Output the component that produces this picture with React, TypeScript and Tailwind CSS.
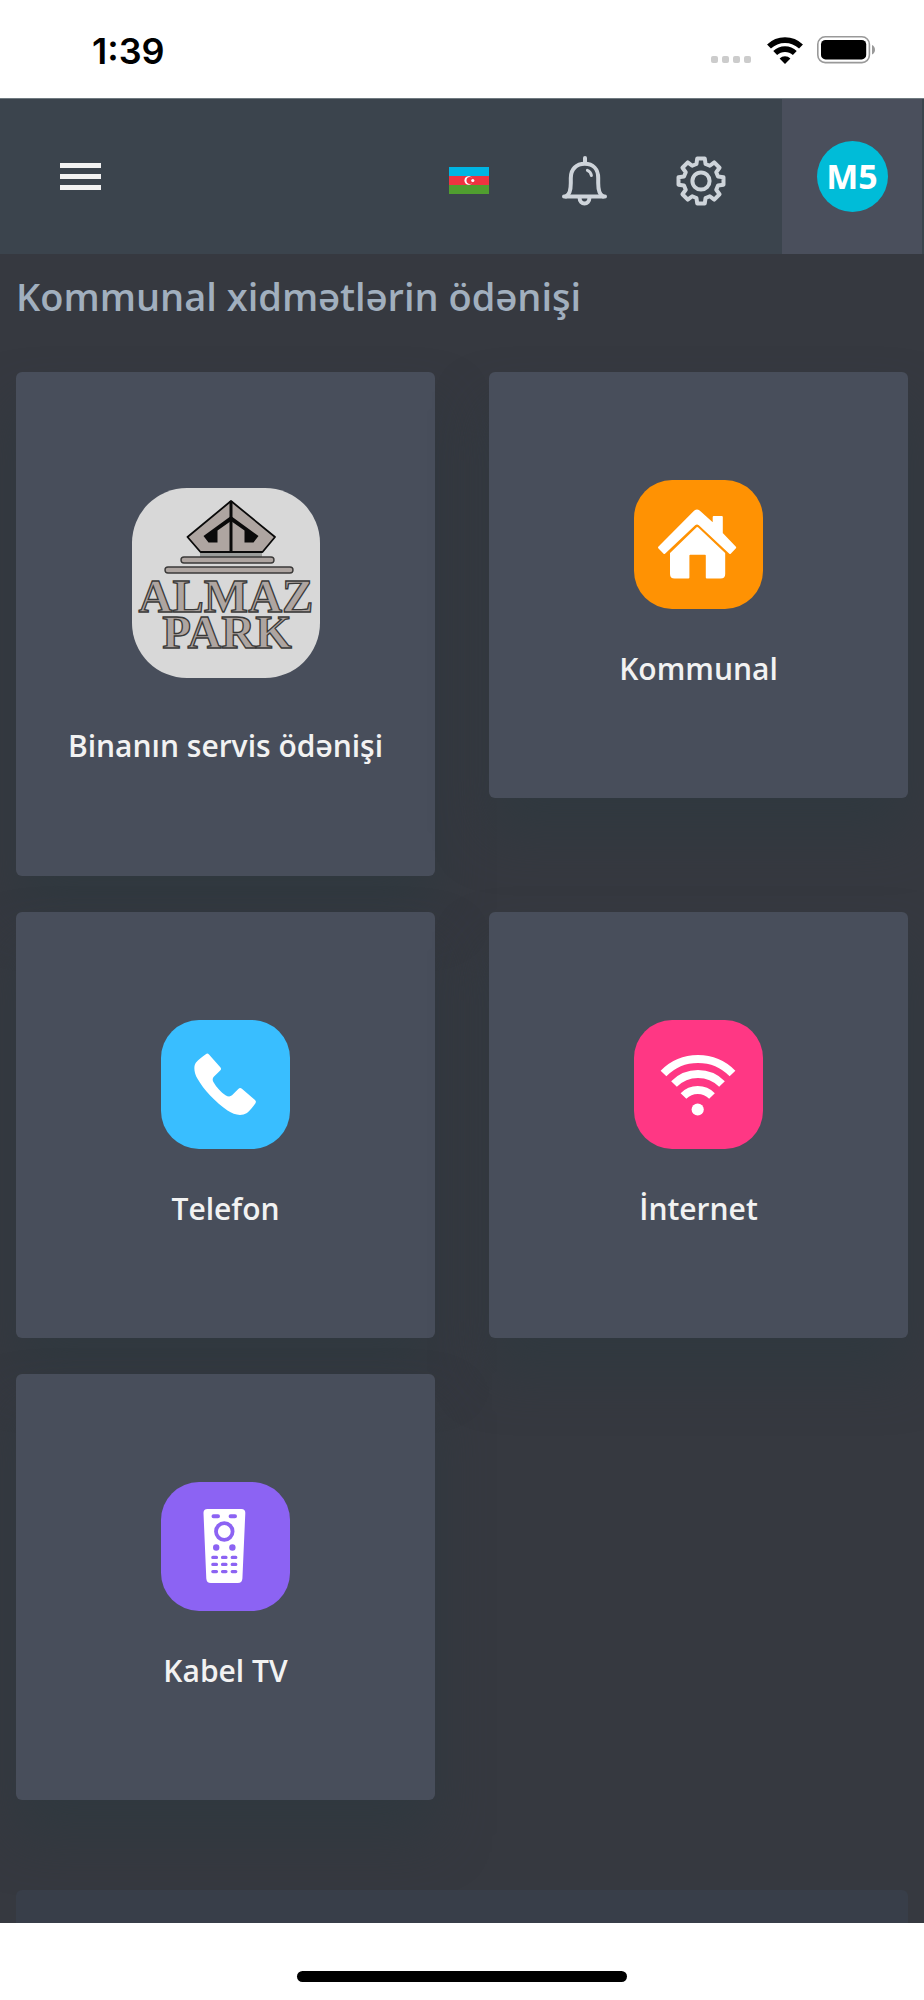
import React from 'react';

// Define the structure of a payment service card
interface Service {
  id: string;
  title: string;
  icon: React.ReactNode;
  large?: boolean;
}

const WifiStatus = () => (
  <svg viewBox="0 0 36 27" className="h-[27px] w-9" fill="none" stroke="#000" strokeWidth="5.6">
    <path d="M2 9.6 A23 23 0 0 1 34 9.6" />
    <path d="M8.2 16 A14.2 14.2 0 0 1 27.8 16" />
    <path d="M18 27 L12.6 21.4 A7.8 7.8 0 0 1 23.4 21.4 Z" fill="#000" stroke="none" />
  </svg>
);

const Battery = () => (
  <svg viewBox="0 0 59 28" className="h-7 w-[59px]">
    <rect x="0.8" y="0.8" width="51.6" height="25.8" rx="7.5" fill="none" stroke="#999" strokeWidth="1.6" />
    <rect x="4" y="4" width="45.2" height="19.4" rx="4.5" fill="#000" />
    <path d="M55 9 Q58 10.5 58 13.7 Q58 17 55 18.4 Z" fill="#999" />
  </svg>
);

const Flag = () => (
  <svg viewBox="0 0 40 27" className="h-[27px] w-10">
    <rect width="40" height="9" fill="#00b5e2" />
    <rect y="9" width="40" height="9" fill="#ef3340" />
    <rect y="18" width="40" height="9" fill="#509e2f" />
    <circle cx="19.6" cy="13.5" r="4.2" fill="#fff" />
    <circle cx="20.9" cy="13.5" r="3.4" fill="#ef3340" />
    <circle cx="23.8" cy="13.5" r="1.6" fill="#fff" />
  </svg>
);

const Bell = () => (
  <svg viewBox="0 0 45 50" className="h-[50px] w-[45px]" fill="none" stroke="#ced4da" strokeWidth="4" strokeLinecap="round" strokeLinejoin="round">
    <path d="M23 2 V7" />
    <path d="M2 40.6 H43" />
    <path d="M4 40.4 C8 38.5 8.8 34 8.8 27 V22 C8.8 13 14.5 7.8 22.7 7.8 C31 7.8 36.2 13 36.2 22 V27 C36.2 34 37.2 38.5 41 40.4" />
    <path d="M17.6 42 C17.6 49.2 27.4 49.2 27.4 42" />
    <path d="M25.4 14.4 C28 15.4 29 17 29.4 19.6" strokeWidth="3" />
  </svg>
);

// Outline of the eight gear teeth
const gearPoints = Array.from({ length: 8 }, (_, i) =>
  [[-15, 17.6], [-9.5, 22.8], [9.5, 22.8], [15, 17.6]].map(([offset, radius]) => {
    const angle = ((i * 45 + offset) * Math.PI) / 180;
    return `${(25 + radius * Math.sin(angle)).toFixed(2)},${(25 - radius * Math.cos(angle)).toFixed(2)}`;
  }).join(' ')
).join(' ');

const Gear = () => (
  <svg viewBox="0 0 50 50" className="size-[50px]" fill="none" stroke="#ced4da" strokeWidth="4" strokeLinejoin="round">
    <polygon points={gearPoints} />
    <circle cx="25" cy="25" r="8.6" />
  </svg>
);

const AlmazLogo = () => (
  <svg viewBox="0 0 188 190" className="h-[190px] w-[188px]">
    <rect width="188" height="190" rx="55" fill="#d8d8d8" />
    <g fill="#aea5a1" stroke="#0a0a0a" strokeWidth="1.8" strokeLinejoin="round">
      <path d="M99 13 L143 49 L130.5 64 H68.5 L55.5 49 Z" />
      <path d="M99 28 L71.5 48 L76.5 54.5 H85.5 V42.5 L99 33 L112.5 42.5 V54.5 H121.5 L126.5 48 Z" fill="#0a0a0a" stroke="none" />
      <path d="M99 13 V64" strokeWidth="3" />
    </g>
    <rect x="68" y="65" width="62" height="4" fill="#9b9d9b" />
    <g fill="#aea5a1" stroke="#3a3938" strokeWidth="1.4">
      <rect x="49" y="69" width="93" height="6" rx="3" />
      <rect x="33" y="79" width="128" height="6" rx="3" />
    </g>
    <text textAnchor="middle" fill="#aea5a1" stroke="#3a3938" strokeWidth="1.3" fontFamily="'Liberation Serif', serif" fontWeight="700" fontSize="47">
      <tspan x="94" y="124">ALMAZ</tspan>
      <tspan x="95" y="160">PARK</tspan>
    </text>
  </svg>
);

const HouseIcon = () => (
  <svg viewBox="0 0 129 129" className="size-[129px]">
    <rect width="129" height="129" rx="38" fill="#ff9203" />
    <g fill="#fff" stroke="#fff" strokeWidth="2" strokeLinejoin="round">
      <path d="M61 31.2 Q63 29.8 65 31.2 L79.7 44.5 V37 H87.8 V53.5 L101.2 67.5 L96 73 L65.5 44.5 Q63 42.3 60.5 44.5 L30.3 73 L25 67.5 Z" />
      <path d="M63.3 48 L90.2 73.5 V94 Q90.2 97.6 86.6 97.6 H72.8 V75.6 Q72.8 73.8 71 73.8 H56.2 Q54.4 73.8 54.4 75.6 V97.6 H40.6 Q37 97.6 37 94 V73.5 Z" />
    </g>
  </svg>
);

const PhoneIcon = () => (
  <svg viewBox="0 0 129 129" className="size-[129px]">
    <rect width="129" height="129" rx="38" fill="#39beff" />
    <path
      d="M44.8 34.2 Q46.4 32.8 48 34.4 L59.3 47.2 Q60.8 49 59.2 50.6 L52.8 56.8 Q50.8 58.8 52.4 62 C55.5 67.5 60 72.3 64.5 75.2 Q68.4 77.6 71 75.3 L77.3 69 Q79 67.2 80.9 68.8 L94 80 Q95.7 81.6 94.3 83.5 C91.5 87.5 89 90.5 86 93 C80 96.5 73 94.8 66.5 90.5 C55 82.8 42.5 69.5 36.5 58.8 C33 52.5 32.3 46 35 42.5 C37.8 39.3 41 36.7 44.8 34.2 Z"
      fill="#fff"
    />
  </svg>
);

const InternetIcon = () => (
  <svg viewBox="0 0 129 129" className="size-[129px]">
    <rect width="129" height="129" rx="38" fill="#ff3784" />
    <g fill="none" stroke="#fff" strokeWidth="8">
      <path d="M29.5 53.5 A48.3 48.3 0 0 1 98.5 53.5" />
      <path d="M40 64 A33.8 33.8 0 0 1 88 64" />
      <path d="M49.5 76 A20 20 0 0 1 78 76" />
    </g>
    <circle cx="63.7" cy="89.5" r="6.1" fill="#fff" />
  </svg>
);

const RemoteIcon = () => (
  <svg viewBox="0 0 129 129" className="size-[129px]">
    <rect width="129" height="129" rx="38" fill="#8c63f3" />
    <path d="M46.5 27 H80.3 Q84.5 27 84.3 31.2 L81.4 96.5 Q81.1 101 76.8 101 H49.8 Q45.6 101 45.3 96.5 L42.5 31.2 Q42.3 27 46.5 27 Z" fill="#fff" />
    <g stroke="#8c63f3" strokeLinecap="round" fill="none">
      <path d="M52.5 34.2 H57 M69.6 34.2 H74" strokeWidth="4" />
      <circle cx="63.3" cy="49.5" r="8.3" strokeWidth="3.8" />
      <path
        d="M51.8 75.4 H55.5 M61.5 75.4 H65 M71.2 75.4 H74.8 M51.8 82.4 H55.5 M61.5 82.4 H65 M71.2 82.4 H74.8 M51.8 89.6 H55.5 M61.5 89.6 H65 M71.2 89.6 H74.8"
        strokeWidth="3.2"
      />
    </g>
    <circle cx="55.2" cy="65.5" r="3.2" fill="#8c63f3" />
    <circle cx="71.4" cy="65.5" r="3.2" fill="#8c63f3" />
  </svg>
);

const services: Service[] = [
  { id: 'building', title: 'Binanın servis ödənişi', icon: <AlmazLogo />, large: true },
  { id: 'utilities', title: 'Kommunal', icon: <HouseIcon /> },
  { id: 'phone', title: 'Telefon', icon: <PhoneIcon /> },
  { id: 'internet', title: 'İnternet', icon: <InternetIcon /> },
  { id: 'cable', title: 'Kabel TV', icon: <RemoteIcon /> },
];

function ServiceCard({ title, icon, large }: Service) {
  return (
    <a
      href="#"
      className={`flex flex-col items-center rounded-md bg-[#484e5b] shadow-[0_36px_52px_rgba(48,57,63,0.9)] ${
        large ? 'gap-12 pt-[116px] pb-[110px]' : 'gap-10 pt-[108px] pb-[109px]'
      }`}
    >
      {icon}
      <span className="text-[30px] leading-10 font-semibold text-[#f2f2f2]">{title}</span>
    </a>
  );
}

export default function App() {
  return (
    <div className="flex min-h-screen flex-col bg-white font-['Open_Sans','Noto_Sans',sans-serif]">
      {/* Status bar */}
      <div className="flex h-[98px] items-center justify-between pt-1 pr-12 pl-[92px]">
        <span className="font-['Inter',sans-serif] text-[36px] leading-10 font-semibold text-black">1:39</span>
        <div className="flex items-center">
          <div className="flex gap-1 pt-4">
            {[0, 1, 2, 3].map((dot) => (
              <span key={dot} className="size-[7px] rounded-xs bg-[#ccc]" />
            ))}
          </div>
          <div className="flex items-center gap-[14px] pb-0.5 pl-4">
            <WifiStatus />
            <Battery />
          </div>
        </div>
      </div>

      {/* Top bar */}
      <header className="z-10 flex h-[156px] items-stretch justify-between border-t border-[#6f7a80] bg-[#3b444d] pr-0.5 pl-[60px]">
        <button type="button" aria-label="Menu" className="flex flex-col justify-center gap-1.5">
          <span className="h-[5px] w-[41px] bg-[#f2f2f2]" />
          <span className="h-[5px] w-[41px] bg-[#f2f2f2]" />
          <span className="h-[5px] w-[41px] bg-[#f2f2f2]" />
        </button>
        <div className="flex">
          <div className="flex items-center gap-[69px] pt-2 pr-14">
            <button type="button" aria-label="Language" className="pr-1">
              <Flag />
            </button>
            <button type="button" aria-label="Notifications">
              <Bell />
            </button>
            <button type="button" aria-label="Settings">
              <Gear />
            </button>
          </div>
          <button type="button" className="flex w-[140px] items-center justify-center bg-[#4a4f5c]">
            <span className="flex size-[71px] items-center justify-center rounded-full bg-[#00bcd8] text-[34px] font-bold text-white">
              M5
            </span>
          </button>
        </div>
      </header>

      {/* Services */}
      <main className="flex flex-1 flex-col overflow-hidden bg-[#363940] px-4">
        <h1 className="pt-4 text-[38px] leading-[52px] font-semibold text-[#a1afbe]">Kommunal xidmətlərin ödənişi</h1>
        <div className="grid grid-cols-2 items-start gap-x-[54px] gap-y-9 pt-[50px]">
          {services.map((service) => (
            <ServiceCard key={service.id} {...service} />
          ))}
        </div>
        <div className="z-0 mt-[90px] min-h-8 flex-1 rounded-t-md bg-[#383e49]" />
      </main>

      {/* Home indicator */}
      <footer className="flex h-[77px] items-end justify-center pb-[18px]">
        <span className="h-[11px] w-[330px] rounded-full bg-black" />
      </footer>
    </div>
  );
}
